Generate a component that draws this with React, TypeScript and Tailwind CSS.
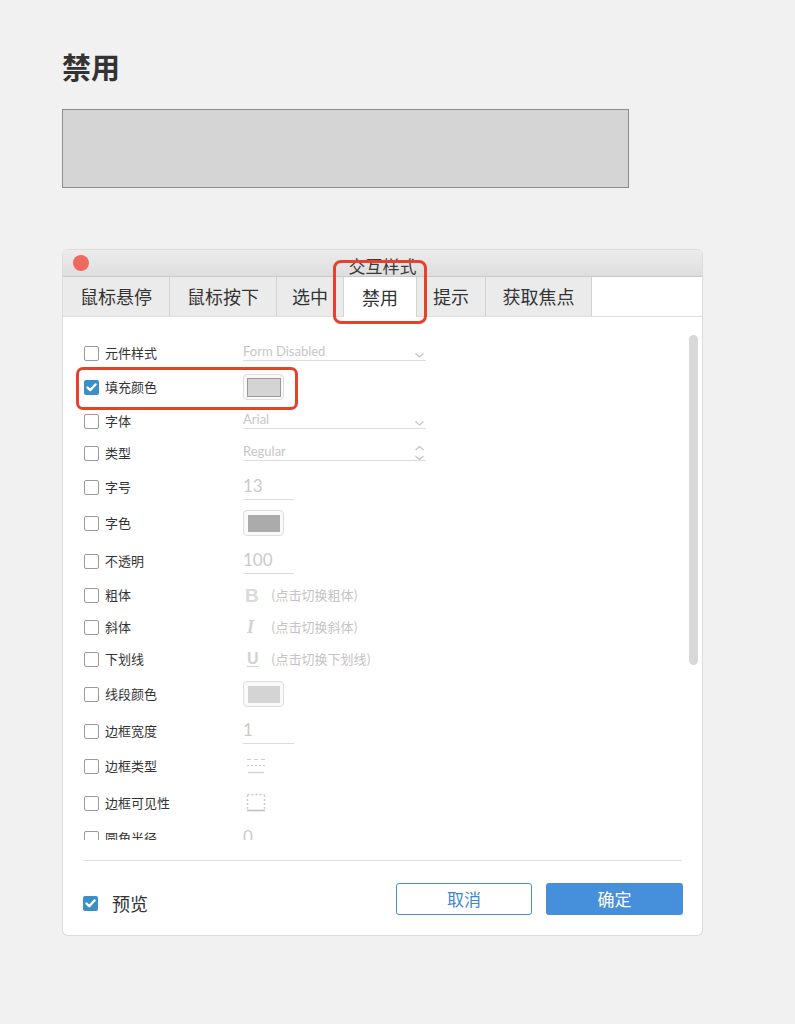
import React from 'react';

const CJK = '"Noto Sans CJK SC", "Noto Sans", sans-serif';
const LATIN = 'Lato, "Noto Sans CJK SC", sans-serif';

function Checkbox({ checked }: { checked?: boolean }) {
  if (checked) {
    return (
      <div className="w-[15px] h-[15px] rounded-[2px] bg-[#3a8fc7] flex items-center justify-center shrink-0">
        <svg width="11" height="9" viewBox="0 0 11 9" fill="none">
          <path d="M1.5 4.5 L4.2 7.2 L9.5 1.5" stroke="#fff" strokeWidth="2.4" strokeLinecap="round" strokeLinejoin="round" />
        </svg>
      </div>
    );
  }
  return <div className="w-[15px] h-[15px] rounded-[2px] border border-[#9a9a9a] bg-white shrink-0" />;
}

function Select({ value, updown }: { value: string; updown?: boolean }) {
  return (
    <div className="w-[183px] h-[19px] -mt-[3px] border-b border-[#dcdcdc] flex items-center justify-between">
      <span className="text-[13px] leading-none text-[#c6c6c6]" style={{ fontFamily: LATIN }}>
        {value}
      </span>
      {updown ? (
        <svg width="11" height="16" viewBox="0 0 11 16" fill="none" className="mr-[1px] mt-[4px]">
          <path d="M1.5 5 L5.5 1.5 L9.5 5" stroke="#c4c4c4" strokeWidth="1.2" />
          <path d="M1.5 11 L5.5 14.5 L9.5 11" stroke="#c4c4c4" strokeWidth="1.2" />
        </svg>
      ) : (
        <svg width="11" height="7" viewBox="0 0 11 7" fill="none" className="mr-[1px] mt-[8px]">
          <path d="M1.5 1.5 L5.5 5 L9.5 1.5" stroke="#c4c4c4" strokeWidth="1.2" />
        </svg>
      )}
    </div>
  );
}

function Swatch({ fill, dark }: { fill: string; dark?: boolean }) {
  return (
    <div className="w-[41px] h-[26px] rounded-[4px] border border-[#dedede] bg-[#fafafa] flex items-center justify-center">
      <div
        className={
          dark
            ? 'w-[34px] h-[19px] border border-[#9a9a9a]'
            : 'w-[32px] h-[17px]'
        }
        style={{ backgroundColor: fill }}
      />
    </div>
  );
}

function NumInput({ value }: { value: string }) {
  return (
    <div className="w-[51px] h-[28px] -mt-[2px] border-b border-[#dcdcdc] flex items-center">
      <span className="text-[17px] leading-none text-[#cacaca]" style={{ fontFamily: LATIN }}>
        {value}
      </span>
    </div>
  );
}

function Toggle({ glyph, hint }: { glyph: React.ReactNode; hint: string }) {
  return (
    <div className="flex items-center">
      <div className="w-[28px] pl-[2px] flex items-center">{glyph}</div>
      <span className="text-[13px] text-[#c4c4c4]" style={{ fontFamily: CJK }}>
        {hint}
      </span>
    </div>
  );
}

function BorderTypeIcon() {
  return (
    <svg width="22" height="18" viewBox="0 0 22 18" fill="none" className="ml-[2px]">
      <path d="M2 2.5 H20" stroke="#d0d0d0" strokeWidth="1" strokeDasharray="4 3" />
      <path d="M2 8.5 H20" stroke="#d0d0d0" strokeWidth="1" strokeDasharray="2 2" />
      <path d="M3 15.5 H19" stroke="#cfcfcf" strokeWidth="1.2" />
    </svg>
  );
}

function BorderVisIcon() {
  return (
    <svg width="22" height="20" viewBox="0 0 22 20" fill="none" className="ml-[2px]">
      <path d="M2.5 1.5 H19.5" stroke="#c8c8c8" strokeWidth="1.4" strokeDasharray="2 2" />
      <path d="M2.5 2 V17" stroke="#c8c8c8" strokeWidth="1.4" strokeDasharray="2 2" />
      <path d="M19.5 2 V17" stroke="#c8c8c8" strokeWidth="1.4" strokeDasharray="2 2" />
      <path d="M2 17.5 H20" stroke="#c0c0c0" strokeWidth="1.6" />
    </svg>
  );
}

type Row = { label: string; h: number; control: React.ReactNode; checked?: boolean; highlight?: boolean };

const rows: Row[] = [
  { label: '元件样式', h: 34, control: <Select value="Form Disabled" /> },
  { label: '填充颜色', h: 34, control: <Swatch fill="#d4d4d4" dark />, checked: true, highlight: true },
  { label: '字体', h: 32, control: <Select value="Arial" /> },
  { label: '类型', h: 34, control: <Select value="Regular" updown /> },
  { label: '字号', h: 36, control: <NumInput value="13" /> },
  { label: '字色', h: 38, control: <Swatch fill="#ababab" /> },
  { label: '不透明', h: 34, control: <NumInput value="100" /> },
  {
    label: '粗体',
    h: 32,
    control: (
      <Toggle
        glyph={<span className="text-[19px] font-bold leading-none text-[#dadada]" style={{ fontFamily: '"Liberation Sans", sans-serif' }}>B</span>}
        hint="(点击切换粗体)"
      />
    ),
  },
  {
    label: '斜体',
    h: 32,
    control: (
      <Toggle
        glyph={<span className="text-[18px] italic font-bold leading-none text-[#d2d2d2] ml-[2px]" style={{ fontFamily: '"Liberation Serif", serif' }}>I</span>}
        hint="(点击切换斜体)"
      />
    ),
  },
  {
    label: '下划线',
    h: 35,
    control: (
      <Toggle
        glyph={<span className="text-[16px] font-bold leading-none text-[#d2d2d2] underline underline-offset-2 ml-[2px]" style={{ fontFamily: '"Liberation Sans", sans-serif' }}>U</span>}
        hint="(点击切换下划线)"
      />
    ),
  },
  { label: '线段颜色', h: 37, control: <Swatch fill="#d4d4d4" /> },
  { label: '边框宽度', h: 35, control: <NumInput value="1" /> },
  { label: '边框类型', h: 37, control: <BorderTypeIcon /> },
  { label: '边框可见性', h: 35, control: <BorderVisIcon /> },
  { label: '圆角半径', h: 35, control: <NumInput value="0" /> },
];

const tabs = ['鼠标悬停', '鼠标按下', '选中', '禁用', '提示', '获取焦点'];
const tabWidths = ['w-[107px]', 'w-[107px]', 'w-[67px]', 'w-[73px]', 'w-[69px]', 'w-[106px]'];

export default function App() {
  return (
    <div className="min-h-[1024px] bg-[#f1f1f1] pl-[62px] pt-[51px]" style={{ fontFamily: CJK }}>
      <h1 className="text-[29px] leading-[30px] font-bold text-[#333]">禁用</h1>

      <div className="mt-[28px] w-[567px] h-[79px] bg-[#d5d5d5] border border-[#8c8c8c]" />

      <div className="mt-[62px] ml-px w-[639px] h-[685px] bg-white rounded-[5px] shadow-[0_0_0_1px_#dcdcdc] flex flex-col relative">
        {/* title bar */}
        <div className="h-[27px] rounded-t-[5px] bg-gradient-to-b from-[#ececec] to-[#dedede] border-b border-[#c8c8c8] relative overflow-hidden flex items-center">
          <div className="ml-[10px] w-[16px] h-[16px] rounded-full bg-[#ee6a5e]" />
          <div className="absolute inset-x-0 top-[4px] text-center text-[17px] leading-[24px] text-[#3a3a3a]">交互样式</div>
        </div>

        {/* tabs */}
        <div className="h-[40px] flex bg-white border-b border-[#dedede]">
          {tabs.map((t, i) => {
            const active = t === '禁用';
            return (
              <div
                key={t}
                className={`${tabWidths[i]} relative flex items-center justify-center text-[18px] text-[#333] border-r border-[#d3d3d3] ${
                  active ? 'bg-white -mb-px' : 'bg-[#ebebeb]'
                }`}
              >
                {t}
                {active && (
                  <div className="absolute -left-[11px] -right-[11px] -top-[17px] -bottom-[7px] border-[3px] border-[#e5412d] rounded-[8px] pointer-events-none z-10" />
                )}
              </div>
            );
          })}
          <div className="flex-1 bg-white" />
        </div>

        {/* scrollable form */}
        <div className="h-[523px] overflow-hidden pt-[20px] pl-[21px]">
          {rows.map((r) => (
            <div key={r.label} className="flex items-start" style={{ height: r.h }}>
              <div className="h-8 flex items-center relative">
                <div className="w-[159px] flex items-center gap-[6px]">
                  <Checkbox checked={r.checked} />
                  <span className="text-[13px] text-[#333]">{r.label}</span>
                </div>
                {r.control}
                {r.highlight && (
                  <div className="absolute -left-[8px] top-[-4px] w-[222px] h-[43px] border-[3px] border-[#e5412d] rounded-[7px] pointer-events-none" />
                )}
              </div>
            </div>
          ))}
        </div>

        {/* scrollbar */}
        <div className="absolute left-[626px] top-[85px] w-[9px] h-[330px] rounded-full bg-[#d9d9d9]" />

        <div className="mt-[20px] mx-[20px] border-t border-[#e0e0e0]" />

        {/* footer */}
        <div className="flex items-start justify-between pl-[20px] pr-[19px] pt-[22px]">
          <div className="flex items-center gap-[14px] mt-[11px]">
            <Checkbox checked />
            <span className="text-[18px] leading-none text-[#333]">预览</span>
          </div>
          <div className="flex gap-[14px]">
            <button className="w-[136px] h-[32px] rounded-[3px] border border-[#4a8fd8] bg-white text-[17px] text-[#3d86d4]">
              取消
            </button>
            <button className="w-[137px] h-[32px] rounded-[3px] bg-[#4690db] text-[17px] text-white">
              确定
            </button>
          </div>
        </div>
      </div>
    </div>
  );
}
